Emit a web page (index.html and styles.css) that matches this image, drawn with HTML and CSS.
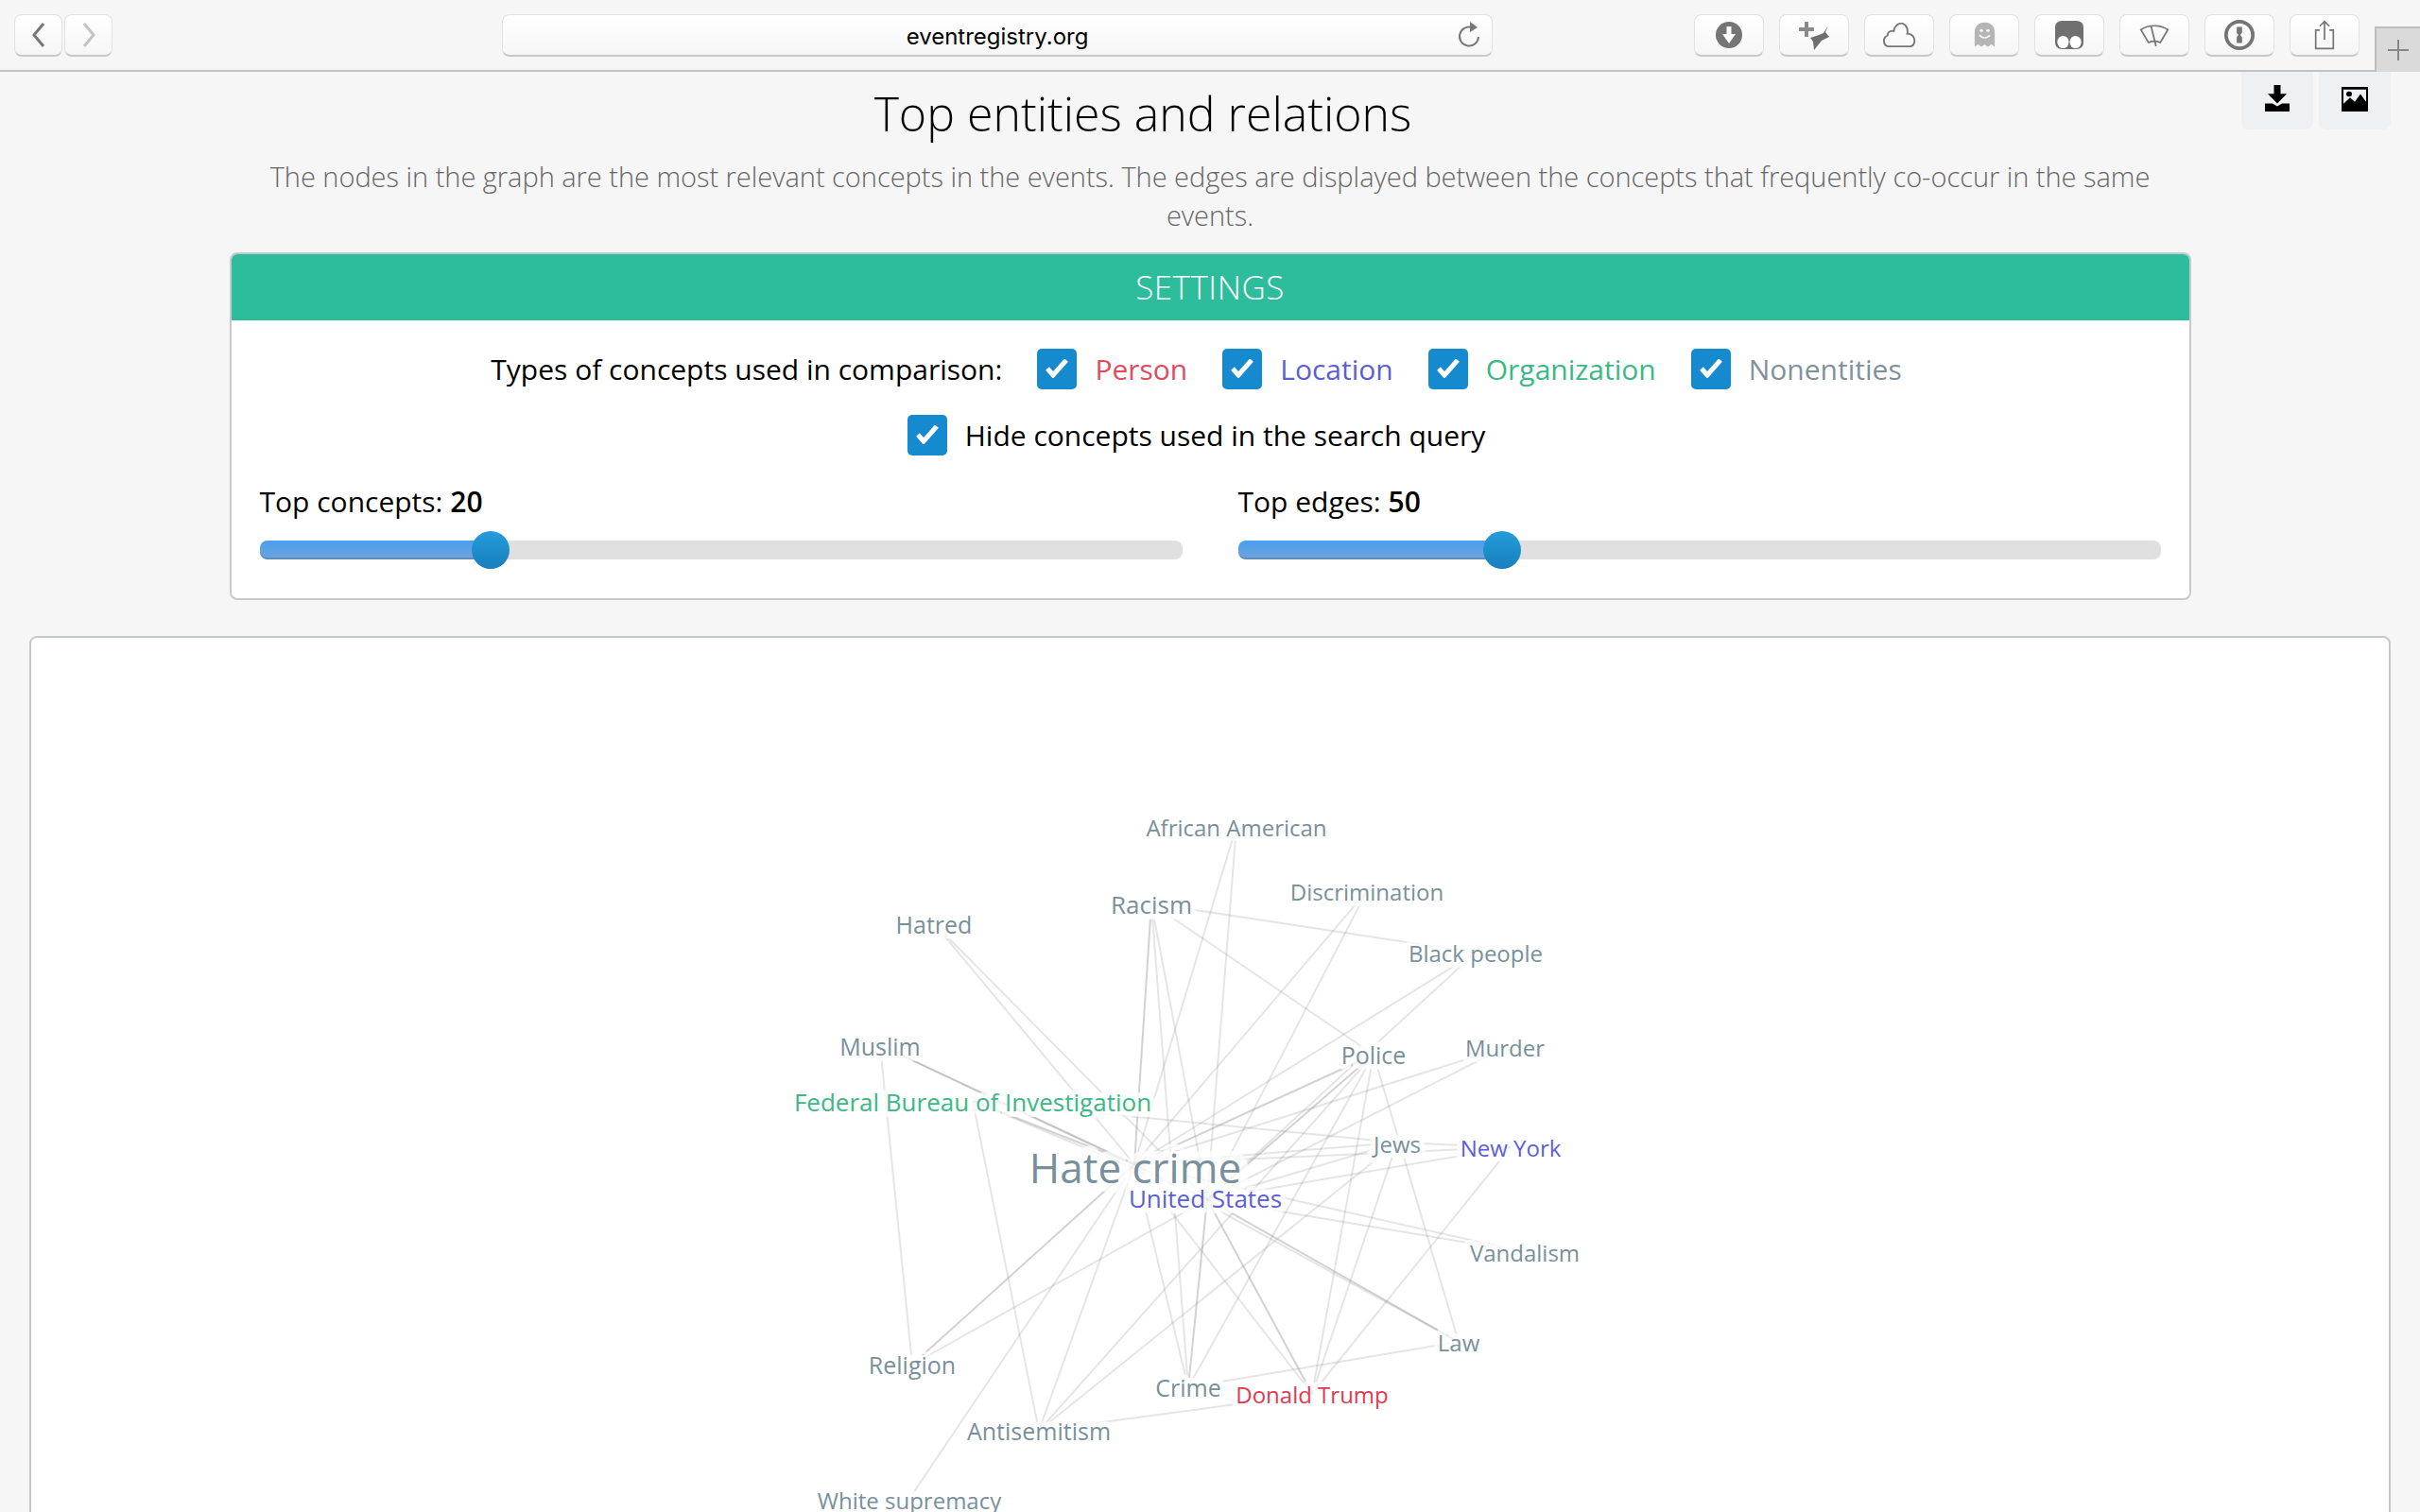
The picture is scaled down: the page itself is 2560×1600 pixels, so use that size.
FILE: index.html
```html
<!DOCTYPE html>
<html>
  <head>
    <meta charset="utf-8">
    <title>Top entities and relations</title>
    <link rel="stylesheet" href="styles.css">
  </head>
  <body>
    <div class="toolbar">
      <div class="nav-buttons">
        <div class="tool-btn nav-btn">
          <svg width="16" height="30" viewBox="0 0 16 30"><path d="M13 3 L3 15 L13 27" class="nav-arrow"/></svg>
        </div>
        <div class="tool-btn nav-btn">
          <svg width="16" height="30" viewBox="0 0 16 30"><path d="M3 3 L13 15 L3 27" class="nav-arrow nav-arrow-off"/></svg>
        </div>
      </div>
      <div class="address-bar">
        <span class="address-text">eventregistry.org</span>
        <svg class="reload" width="26" height="30" viewBox="0 0 26 30">
          <path d="M16 7 A10 10 0 1 0 23 17" fill="none" stroke="#777" stroke-width="2"/>
          <path d="M14 1 L22 7 L14 12 Z" fill="#777"/>
        </svg>
      </div>
      <div class="ext-buttons">
        <div class="tool-btn ext-btn">
          <svg width="34" height="34" viewBox="0 0 34 34">
            <circle cx="17" cy="17" r="14" fill="#757575"/>
            <path d="M14.5 8 H19.5 V16 H24 L17 26 L10 16 H14.5 Z" fill="#fff"/>
          </svg>
        </div>
        <div class="tool-btn ext-btn">
          <svg width="33" height="31" viewBox="0 0 33 31">
            <path d="M8 1 V17 M0 9 H16" stroke="#8a8a8a" stroke-width="4" fill="none"/>
            <path d="M31 5 L28 12 L32 17 L24 21 L16 31 L15 22 L12 18 L21 15 L26 13 Z" fill="#6e6e6e"/>
          </svg>
        </div>
        <div class="tool-btn ext-btn">
          <svg width="36" height="27" viewBox="0 0 38 30" preserveAspectRatio="none">
            <path d="M8 28 C1 28 0 18 6 15 C6 10 11 9 13 10 C14 3 19 0 23 1 C28 3 29 9 28 13 C34 13 37 18 36 23 C35 27 33 28 31 28 Z" fill="none" stroke="#757575" stroke-width="2"/>
          </svg>
        </div>
        <div class="tool-btn ext-btn">
          <svg width="23" height="28" viewBox="0 0 26 36" preserveAspectRatio="none">
            <path d="M1 34 L1 14 C1 5 7 1 13 1 C19 1 25 5 25 14 L25 34 L21 31 L17 34 L13 31 L9 34 L5 31 Z" fill="#b5b5b5"/>
            <circle cx="9" cy="12" r="2" fill="#f6f6f6"/>
            <circle cx="17" cy="12" r="2" fill="#f6f6f6"/>
            <path d="M7 18 C9 23 17 23 19 18" fill="none" stroke="#f6f6f6" stroke-width="2"/>
          </svg>
        </div>
        <div class="tool-btn ext-btn">
          <svg width="30" height="30" viewBox="0 0 32 32">
            <path d="M8 0 H24 C29 0 32 3 32 8 V24 C32 29 29 32 24 32 H8 C3 32 0 29 0 24 V8 C0 3 3 0 8 0 Z" fill="#707070"/>
            <ellipse cx="9" cy="24" rx="6.5" ry="7" fill="#fff"/>
            <ellipse cx="23" cy="24" rx="6.5" ry="7" fill="#fff"/>
          </svg>
        </div>
        <div class="tool-btn ext-btn">
          <svg width="32" height="24" viewBox="0 0 36 30" preserveAspectRatio="none">
            <path d="M2 8 C11 1 25 1 34 8 L25 25 C21 23 15 23 11 25 Z" fill="none" stroke="#757575" stroke-width="2"/>
            <path d="M14 3 L20 30" fill="none" stroke="#757575" stroke-width="2"/>
          </svg>
        </div>
        <div class="tool-btn ext-btn">
          <svg width="34" height="34" viewBox="0 0 36 36">
            <circle cx="18" cy="18" r="15" fill="none" stroke="#757575" stroke-width="4"/>
            <path d="M15 9 H21 V15 L19 18 L21 21 V27 H15 V20 L17 18 L15 16 Z" fill="#757575"/>
          </svg>
        </div>
        <div class="tool-btn ext-btn">
          <svg width="22" height="32" viewBox="0 0 26 38" preserveAspectRatio="none">
            <path d="M7 13 H2 V36 H24 V13 H19" fill="none" stroke="#757575" stroke-width="2"/>
            <path d="M13 2 V25 M7 8 L13 2 L19 8" fill="none" stroke="#757575" stroke-width="2"/>
          </svg>
        </div>
      </div>
      <div class="new-tab">
        <svg width="22" height="22" viewBox="0 0 22 22"><path d="M11 0 V22 M0 11 H22" stroke="#888" stroke-width="2"/></svg>
      </div>
    </div>

    <div class="title-row">
      <h1 class="page-title">Top entities and relations</h1>
      <div class="title-actions">
        <div class="action-btn">
          <svg width="26" height="28" viewBox="0 0 26 30" preserveAspectRatio="none">
            <path d="M9.5 0 H16.5 V10 H23 L13 21 L3 10 H9.5 Z M0 21 H8 L13 24 L18 21 H26 V30 H0 Z" fill="#000"/>
          </svg>
        </div>
        <div class="action-btn action-btn-picture">
          <svg width="28" height="26" viewBox="0 0 28 28" preserveAspectRatio="none">
            <path fill-rule="evenodd" d="M0 0 H28 V28 H0 Z M2 3 V19 L9 12 L14 17 L20 8 L26 17 V3 Z" fill="#000"/>
            <circle cx="8" cy="8" r="3" fill="#000"/>
          </svg>
        </div>
      </div>
    </div>
    <p class="subtitle">The nodes in the graph are the most relevant concepts in the events. The edges are displayed between the concepts that frequently co-occur in the same events.</p>

    <div class="settings">
      <div class="settings-head">SETTINGS</div>
      <div class="settings-body">
        <div class="check-row">
          <span class="row-label">Types of concepts used in comparison:</span>
          <span class="check-item"><span class="check-box"><svg width="24" height="20" viewBox="0 0 24 20"><path d="M2 10 L8 17 L22 1" class="tick"/></svg></span><span class="type-person">Person</span></span>
          <span class="check-item"><span class="check-box"><svg width="24" height="20" viewBox="0 0 24 20"><path d="M2 10 L8 17 L22 1" class="tick"/></svg></span><span class="type-location">Location</span></span>
          <span class="check-item"><span class="check-box"><svg width="24" height="20" viewBox="0 0 24 20"><path d="M2 10 L8 17 L22 1" class="tick"/></svg></span><span class="type-org">Organization</span></span>
          <span class="check-item"><span class="check-box"><svg width="24" height="20" viewBox="0 0 24 20"><path d="M2 10 L8 17 L22 1" class="tick"/></svg></span><span class="type-other">Nonentities</span></span>
        </div>
        <div class="check-row check-row-second">
          <span class="check-item"><span class="check-box"><svg width="24" height="20" viewBox="0 0 24 20"><path d="M2 10 L8 17 L22 1" class="tick"/></svg></span><span>Hide concepts used in the search query</span></span>
        </div>
        <div class="sliders">
          <div class="slider-col">
            <div class="slider-label">Top concepts: <b>20</b></div>
            <div class="slider-track">
              <div class="slider-fill" style="width: 244px"></div>
              <div class="slider-knob" style="left: 224px"></div>
            </div>
          </div>
          <div class="slider-col">
            <div class="slider-label">Top edges: <b>50</b></div>
            <div class="slider-track">
              <div class="slider-fill" style="width: 279px"></div>
              <div class="slider-knob" style="left: 259px"></div>
            </div>
          </div>
        </div>
      </div>
    </div>

    <div class="graph-panel">
      <svg class="graph" width="2494" height="1000" viewBox="33 676 2494 1000">
        <g class="edges">
          <line x1="988" y1="978" x2="1200" y2="1233"/>
          <line x1="988" y1="978" x2="1277" y2="1270"/>
          <line class="heavy" x1="1218" y1="957" x2="1200" y2="1233"/>
          <line x1="1218" y1="957" x2="1277" y2="1270"/>
          <line x1="1218" y1="957" x2="1257" y2="1469"/>
          <line x1="1218" y1="957" x2="1453" y2="1117"/>
          <line x1="1218" y1="957" x2="1561" y2="1009"/>
          <line x1="1308" y1="875" x2="1200" y2="1233"/>
          <line x1="1308" y1="875" x2="1277" y2="1270"/>
          <line x1="1446" y1="944" x2="1200" y2="1233"/>
          <line x1="1446" y1="944" x2="1277" y2="1270"/>
          <line x1="1561" y1="1009" x2="1200" y2="1233"/>
          <line x1="1561" y1="1009" x2="1277" y2="1270"/>
          <line x1="1592" y1="1109" x2="1200" y2="1233"/>
          <line x1="1592" y1="1109" x2="1277" y2="1270"/>
          <line class="heavy" x1="1453" y1="1117" x2="1200" y2="1233"/>
          <line class="heavy" x1="1453" y1="1117" x2="1277" y2="1270"/>
          <line x1="1453" y1="1117" x2="1257" y2="1469"/>
          <line x1="1453" y1="1117" x2="1388" y2="1476"/>
          <line x1="1453" y1="1117" x2="1099" y2="1515"/>
          <line x1="1453" y1="1117" x2="1543" y2="1421"/>
          <line class="heavy" x1="931" y1="1107" x2="1200" y2="1233"/>
          <line x1="931" y1="1107" x2="1277" y2="1270"/>
          <line x1="931" y1="1107" x2="965" y2="1445"/>
          <line class="heavy" x1="1029" y1="1166" x2="1200" y2="1233"/>
          <line x1="1029" y1="1166" x2="1277" y2="1270"/>
          <line x1="1029" y1="1166" x2="1478" y2="1210"/>
          <line x1="1029" y1="1166" x2="1099" y2="1515"/>
          <line x1="1478" y1="1210" x2="1200" y2="1233"/>
          <line x1="1478" y1="1210" x2="1277" y2="1270"/>
          <line x1="1478" y1="1210" x2="1388" y2="1476"/>
          <line x1="1478" y1="1210" x2="1099" y2="1515"/>
          <line x1="1598" y1="1215" x2="1200" y2="1233"/>
          <line x1="1598" y1="1215" x2="1277" y2="1270"/>
          <line x1="1598" y1="1215" x2="1478" y2="1210"/>
          <line x1="1598" y1="1215" x2="1388" y2="1476"/>
          <line x1="1613" y1="1326" x2="1200" y2="1233"/>
          <line x1="1613" y1="1326" x2="1277" y2="1270"/>
          <line x1="1543" y1="1421" x2="1200" y2="1233"/>
          <line class="heavy" x1="1543" y1="1421" x2="1277" y2="1270"/>
          <line x1="1543" y1="1421" x2="1257" y2="1469"/>
          <line class="heavy" x1="965" y1="1445" x2="1200" y2="1233"/>
          <line x1="965" y1="1445" x2="1277" y2="1270"/>
          <line x1="1257" y1="1469" x2="1200" y2="1233"/>
          <line class="heavy" x1="1257" y1="1469" x2="1277" y2="1270"/>
          <line x1="1388" y1="1476" x2="1200" y2="1233"/>
          <line class="heavy" x1="1388" y1="1476" x2="1277" y2="1270"/>
          <line x1="1388" y1="1476" x2="1099" y2="1515"/>
          <line x1="1099" y1="1515" x2="1200" y2="1233"/>
          <line x1="962" y1="1587" x2="1200" y2="1233"/>
        </g>
        <g class="labels">
          <text x="1308" y="884">African American</text>
          <text class="big" x="1218" y="966">Racism</text>
          <text x="1446" y="952">Discrimination</text>
          <text class="mid" x="988" y="987">Hatred</text>
          <text x="1561" y="1017">Black people</text>
          <text class="mid" x="931" y="1116">Muslim</text>
          <text class="mid" x="1453" y="1125">Police</text>
          <text x="1592" y="1117">Murder</text>
          <text class="org" x="1029" y="1175">Federal Bureau of Investigation</text>
          <text x="1478" y="1219">Jews</text>
          <text class="loc" x="1598" y="1223">New York</text>
          <text class="main" x="1201" y="1251">Hate crime</text>
          <text class="loc big" x="1275" y="1277">United States</text>
          <text x="1613" y="1334">Vandalism</text>
          <text x="1543" y="1429">Law</text>
          <text class="mid" x="965" y="1453">Religion</text>
          <text class="mid" x="1257" y="1477">Crime</text>
          <text class="person" x="1388" y="1484">Donald Trump</text>
          <text class="mid" x="1099" y="1523">Antisemitism</text>
          <text x="962" y="1596">White supremacy</text>
        </g>
      </svg>
    </div>
  </body>
</html>
```

FILE: styles.css
```css
html,
body {
  height: 1600px;
  overflow: hidden;
}
body {
  margin: 0;
  background-color: #f6f6f6;
  font-family: "Open Sans", sans-serif;
  color: #000;
}

/* browser bar */
.toolbar {
  display: flex;
  align-items: flex-start;
  height: 74px;
  padding-top: 15px;
  padding-left: 15px;
  box-sizing: border-box;
  position: relative;
  background-color: #f6f6f6;
  border-bottom: 0;
  box-shadow: 0 2px 0 #c2c2c2;
  margin-bottom: 2px;
}
.tool-btn {
  display: flex;
  align-items: center;
  justify-content: center;
  height: 45px;
  box-sizing: border-box;
  border: 1px solid #e2e2e2;
  border-bottom: 2px solid #c8c8c8;
  border-radius: 8px;
  background: linear-gradient(#ffffff, #f6f6f6);
}
.nav-buttons {
  display: flex;
  gap: 2px;
}
.nav-btn {
  width: 51px;
}
.nav-arrow {
  fill: none;
  stroke: #777;
  stroke-width: 3;
}
.nav-arrow-off {
  stroke: #c4c4c4;
}
.address-bar {
  display: flex;
  align-items: center;
  justify-content: center;
  position: relative;
  width: 1048px;
  height: 45px;
  margin-left: 412px;
  box-sizing: border-box;
  border: 1px solid #e2e2e2;
  border-bottom: 2px solid #c8c8c8;
  border-radius: 8px;
  background: linear-gradient(#ffffff, #f6f6f6);
}
.address-text {
  font-family: Inter, sans-serif;
  font-size: 24px;
  margin-top: 3px;
}
.reload {
  position: absolute;
  right: 11px;
  top: 6px;
}
.ext-buttons {
  display: flex;
  gap: 16px;
  margin-left: 213px;
}
.ext-btn {
  width: 74px;
}
.new-tab {
  display: flex;
  align-items: center;
  justify-content: center;
  position: absolute;
  right: 0;
  top: 28px;
  width: 48px;
  height: 48px;
  box-sizing: border-box;
  background-color: #dadada;
  border-left: 2px solid #bdbdbd;
  border-top: 2px solid #bdbdbd;
}

/* title */
.title-row {
  display: flex;
  align-items: flex-start;
  padding: 0 31px 0 47px;
}
.page-title {
  flex: 1;
  margin: 0;
  padding-top: 14px;
  text-align: center;
  font-weight: 300;
  font-size: 50px;
  line-height: 60px;
}
.title-actions {
  display: flex;
  gap: 6px;
}
.action-btn {
  display: flex;
  justify-content: center;
  width: 76px;
  height: 61px;
  padding-top: 14px;
  box-sizing: border-box;
  background-color: #eef1f3;
  border-radius: 0 0 8px 8px;
}
.action-btn-picture {
  padding-top: 16px;
}
.subtitle {
  width: 2040px;
  margin: 16px auto 0;
  text-align: center;
  font-weight: 300;
  font-size: 29px;
  line-height: 41px;
  letter-spacing: -0.03px;
  color: #666;
}

/* settings box */
.settings {
  width: 2075px;
  height: 368px;
  margin: 19px auto 0;
  box-sizing: border-box;
  background-color: #fff;
  border: 2px solid #c6cacc;
  border-radius: 8px;
  overflow: hidden;
}
.settings-head {
  height: 70px;
  background-color: #2dbc9c;
  color: #fff;
  text-align: center;
  font-weight: 300;
  font-size: 35px;
  letter-spacing: 0.5px;
  line-height: 70px;
}
.settings-body {
  padding: 29px 30px 0;
}
.check-row {
  display: flex;
  justify-content: center;
  align-items: center;
  gap: 37px;
  height: 44px;
  padding-right: 29px;
  font-size: 30px;
}
.check-row-second {
  margin-top: 26px;
}
.check-item {
  display: flex;
  align-items: center;
  gap: 19px;
}
.check-box {
  display: flex;
  align-items: center;
  justify-content: center;
  width: 42px;
  height: 43px;
  background-color: #168ace;
  border-radius: 5px;
}
.tick {
  fill: none;
  stroke: #fff;
  stroke-width: 5;
}
.type-person {
  color: #e34a5e;
}
.type-location {
  color: #5a5fd6;
}
.type-org {
  color: #3cb884;
}
.type-other {
  color: #7f919e;
}
.sliders {
  display: flex;
  gap: 59px;
  margin-top: 28px;
}
.slider-col {
  flex: 1;
}
.slider-label {
  font-size: 30px;
  line-height: 42px;
}
.slider-label b {
  font-weight: 600;
}
.slider-track {
  position: relative;
  height: 20px;
  margin-top: 20px;
  background-color: #e0e0e0;
  border-radius: 8px;
}
.slider-fill {
  height: 20px;
  box-sizing: border-box;
  background: linear-gradient(#4a9ef0, #6ca4dc);
  border-bottom: 2px solid #5f8db8;
  border-radius: 8px 0 0 8px;
}
.slider-knob {
  position: absolute;
  top: -10px;
  width: 40px;
  height: 40px;
  border-radius: 50%;
  background: linear-gradient(#259cdb, #177fbc);
}

/* graph */
.graph-panel {
  width: 2498px;
  height: 1000px;
  margin: 38px 0 0 31px;
  box-sizing: border-box;
  background-color: #fff;
  border: 2px solid #c6cacc;
  border-radius: 8px;
}
.graph {
  display: block;
}
.edges line {
  stroke: #888;
  stroke-width: 2;
  stroke-opacity: 0.22;
}
.edges line.heavy {
  stroke-opacity: 0.38;
}
.labels {
  transform: translateY(2px);
}
.labels text {
  font-family: "Open Sans", sans-serif;
  font-size: 24px;
  text-anchor: middle;
  fill: #78909c;
  stroke: #fff;
  stroke-width: 12px;
  stroke-opacity: 0.75;
  stroke-linejoin: round;
  paint-order: stroke;
}
.labels .mid {
  font-size: 25px;
}
.labels .big {
  font-size: 26px;
}
.labels .main {
  font-size: 44px;
  stroke-width: 20px;
}
.labels .org {
  fill: #3cb884;
  font-size: 26px;
}
.labels .loc {
  fill: #5a5fd6;
}
.labels .person {
  fill: #e6394f;
}
```
